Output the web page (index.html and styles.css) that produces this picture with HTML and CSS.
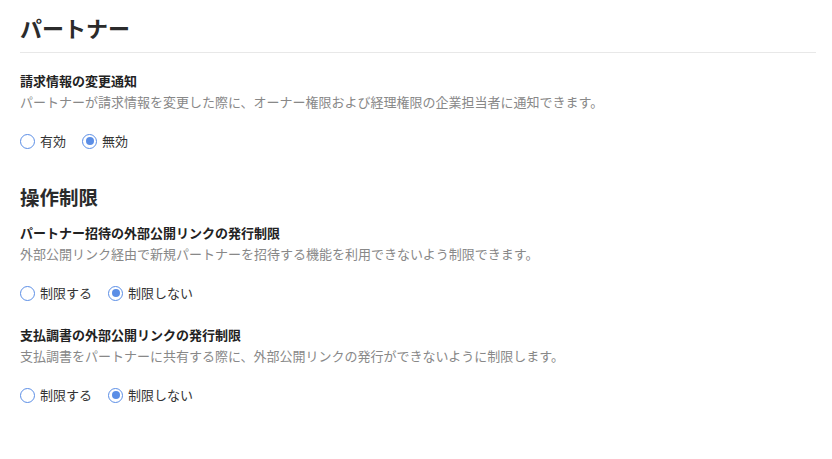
FILE: index.html
```html
<!DOCTYPE html>
<html lang="ja">
<head>
<meta charset="utf-8">
<title>パートナー</title>
<link rel="stylesheet" href="styles.css">
</head>
<body>
<div class="page">
  <h1 class="page-title">パートナー</h1>

  <section class="setting first">
    <div class="setting-title">請求情報の変更通知</div>
    <div class="setting-desc">パートナーが請求情報を変更した際に、オーナー権限および経理権限の企業担当者に通知できます。</div>
    <div class="radio-group">
      <label class="radio"><span class="radio-circle"></span><span class="radio-label">有効</span></label>
      <label class="radio checked"><span class="radio-circle"></span><span class="radio-label">無効</span></label>
    </div>
  </section>

  <h2 class="section-title">操作制限</h2>

  <section class="setting second">
    <div class="setting-title">パートナー招待の外部公開リンクの発行制限</div>
    <div class="setting-desc">外部公開リンク経由で新規パートナーを招待する機能を利用できないよう制限できます。</div>
    <div class="radio-group">
      <label class="radio"><span class="radio-circle"></span><span class="radio-label">制限する</span></label>
      <label class="radio checked"><span class="radio-circle"></span><span class="radio-label">制限しない</span></label>
    </div>
  </section>

  <section class="setting third">
    <div class="setting-title">支払調書の外部公開リンクの発行制限</div>
    <div class="setting-desc">支払調書をパートナーに共有する際に、外部公開リンクの発行ができないように制限します。</div>
    <div class="radio-group">
      <label class="radio"><span class="radio-circle"></span><span class="radio-label">制限する</span></label>
      <label class="radio checked"><span class="radio-circle"></span><span class="radio-label">制限しない</span></label>
    </div>
  </section>
</div>
</body>
</html>
```
FILE: styles.css
```css
* { box-sizing: border-box; }
html, body { margin: 0; padding: 0; background: #fff; }
body {
  font-family: "Noto Sans CJK JP", "Noto Sans", sans-serif;
  color: #333;
  font-size: 13px;
}
.page {
  padding: 0 16px 0 20px;
}
.page-title {
  margin: 0;
  padding: 11px 0 8px;
  font-size: 22px;
  line-height: 33px;
  font-weight: 700;
  color: #2b2b2b;
  border-bottom: 1px solid #e8e8e8;
}
.setting-title {
  font-size: 13px;
  line-height: 20px;
  font-weight: 700;
  color: #222;
}
.setting-desc {
  margin-top: 1px;
  font-size: 13px;
  line-height: 20px;
  color: #888;
}
.setting.first { margin-top: 18px; }
.setting.second { margin-top: 11px; }
.setting.third { margin-top: 22px; }
.radio-group {
  display: flex;
  align-items: center;
  gap: 16px;
  height: 20px;
  margin-top: 19px;
}
.radio {
  display: flex;
  align-items: center;
  gap: 5px;
}
.radio-circle {
  width: 15px;
  height: 15px;
  border-radius: 50%;
  border: 1.7px solid #5b8ee6;
  display: flex;
  align-items: center;
  justify-content: center;
  background: #fff;
}
.radio.checked .radio-circle::after {
  content: "";
  width: 8px;
  height: 8px;
  border-radius: 50%;
  background: #5b8ee6;
}
.radio-label {
  font-size: 13px;
  line-height: 20px;
  color: #333;
}
.section-title {
  margin: 31px 0 0;
  font-size: 19.5px;
  line-height: 30px;
  font-weight: 700;
  color: #2b2b2b;
}
```
